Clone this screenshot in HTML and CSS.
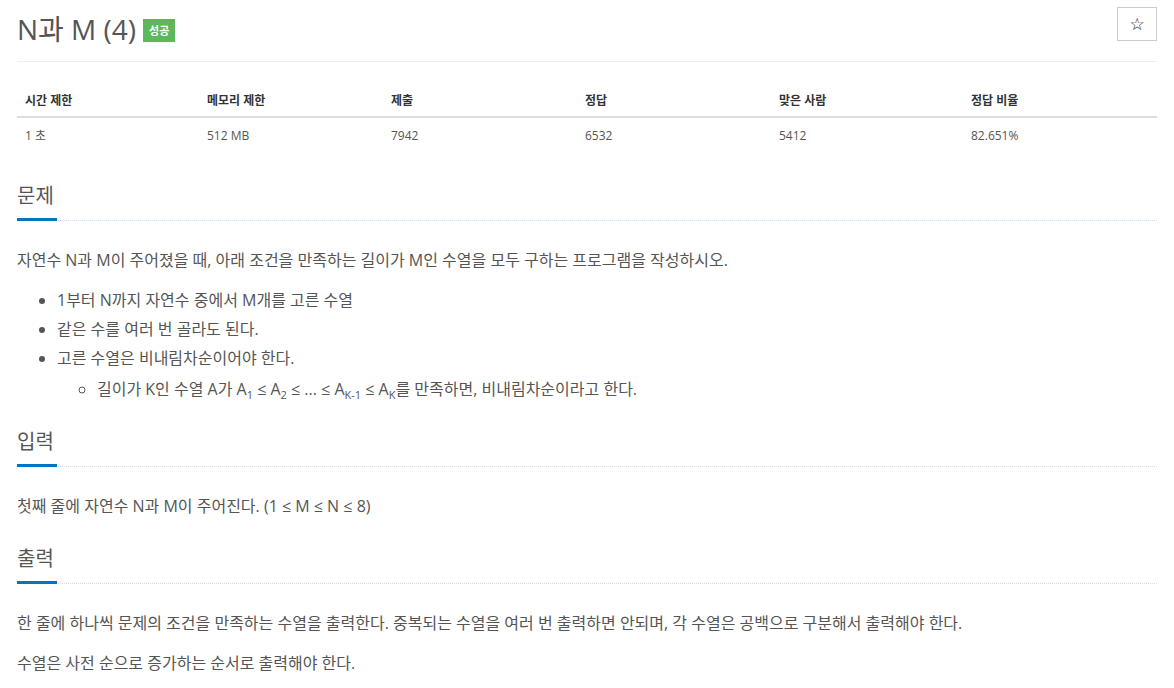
FILE: index.html
```html
<!DOCTYPE html>
<html lang="ko">
<head>
<meta charset="utf-8">
<link rel="stylesheet" href="styles.css">
</head>
<body>
<div class="container">
  <div class="page-header">
    <h1 class="title">N과 M (4) <span class="badge">성공</span></h1>
    <button class="star" aria-label="즐겨찾기">☆</button>
  </div>

  <table class="info">
    <thead>
      <tr>
        <th class="c1">시간 제한</th>
        <th class="c2">메모리 제한</th>
        <th class="c3">제출</th>
        <th class="c4">정답</th>
        <th class="c5">맞은 사람</th>
        <th>정답 비율</th>
      </tr>
    </thead>
    <tbody>
      <tr>
        <td>1 초</td>
        <td>512 MB</td>
        <td>7942</td>
        <td>6532</td>
        <td>5412</td>
        <td>82.651%</td>
      </tr>
    </tbody>
  </table>

  <section class="sec">
    <div class="headline"><h2>문제</h2></div>
    <p>자연수 N과 M이 주어졌을 때, 아래 조건을 만족하는 길이가 M인 수열을 모두 구하는 프로그램을 작성하시오.</p>
    <ul class="list">
      <li>1부터 N까지 자연수 중에서 M개를 고른 수열</li>
      <li>같은 수를 여러 번 골라도 된다.</li>
      <li>고른 수열은 비내림차순이어야 한다.
        <ul class="sub">
          <li>길이가 K인 수열 A가 A<sub>1</sub> ≤ A<sub>2</sub> ≤ ... ≤ A<sub>K-1</sub> ≤ A<sub>K</sub>를 만족하면, 비내림차순이라고 한다.</li>
        </ul>
      </li>
    </ul>
  </section>

  <section class="sec">
    <div class="headline"><h2>입력</h2></div>
    <p>첫째 줄에 자연수 N과 M이 주어진다. (1 ≤ M ≤ N ≤ 8)</p>
  </section>

  <section class="sec">
    <div class="headline"><h2>출력</h2></div>
    <p>한 줄에 하나씩 문제의 조건을 만족하는 수열을 출력한다. 중복되는 수열을 여러 번 출력하면 안되며, 각 수열은 공백으로 구분해서 출력해야 한다.</p>
    <p>수열은 사전 순으로 증가하는 순서로 출력해야 한다.</p>
  </section>
</div>
</body>
</html>
```

FILE: styles.css
```css
* { box-sizing: border-box; }
html, body { margin: 0; padding: 0; background: #fff; }
body {
  font-family: "Open Sans", "Noto Sans CJK KR", sans-serif;
  color: #555;
  font-size: 14px;
  line-height: 1.42857;
}
.container {
  padding: 0 17px;
  width: 1174px;
}
.page-header {
  display: flex;
  justify-content: space-between;
  align-items: flex-start;
  border-bottom: 1px solid #eee;
  padding-top: 8px;
  padding-bottom: 11px;
}
.title {
  margin: 0;
  font-size: 28px;
  font-weight: 400;
  line-height: 42px;
  color: #555;
  display: flex;
  align-items: center;
}
.badge {
  display: inline-block;
  background: #5cb85c;
  color: #fff;
  font-size: 11px;
  font-weight: 700;
  line-height: 23px;
  height: 23px;
  padding: 0 6px;
  margin-left: 7px;
  margin-top: 2px;
}
.star {
  width: 40px;
  height: 34px;
  margin-top: -1px;
  border: 1px solid #ccc;
  background: #fff;
  color: #222;
  font-size: 17px;
  line-height: 1;
  padding: 0;
  font-family: "DejaVu Sans", sans-serif;
}
.info {
  width: 100%;
  border-collapse: collapse;
  margin-top: 20px;
  margin-bottom: 16px;
  font-size: 12px;
}
.info th {
  text-align: left;
  font-weight: 700;
  color: #333;
  padding: 8px 8px 5px;
  border-bottom: 2px solid #ddd;
  height: 35px;
}
.info td {
  padding: 8px;
  color: #555;
  height: 36px;
}
.info .c1 { width: 182px; }
.info .c2 { width: 184px; }
.info .c3 { width: 194px; }
.info .c4 { width: 194px; }
.info .c5 { width: 192px; }

.sec { padding-top: 12px; }
.headline {
  border-bottom: 1px dotted #d5dceb;
  margin: 0 0 25px;
  line-height: 0;
}
.headline h2 {
  display: inline-block;
  margin: 0 0 -1px;
  font-size: 20px;
  font-weight: 400;
  line-height: 30px;
  padding-bottom: 7px;
  border-bottom: 3px solid #0076c0;
  color: #555;
  min-width: 40px;
}
.sec p {
  font-size: 16px;
  line-height: 29px;
  margin: 0 0 11px;
}
.list {
  margin: 0 0 11px;
  padding-left: 40px;
  font-size: 16px;
  line-height: 29px;
}
.list .sub {
  list-style: circle;
  padding-left: 40px;
  margin: 2px 0 0;
}
sub {
  font-size: 11px;
  line-height: 0;
  vertical-align: -4px;
}
```
